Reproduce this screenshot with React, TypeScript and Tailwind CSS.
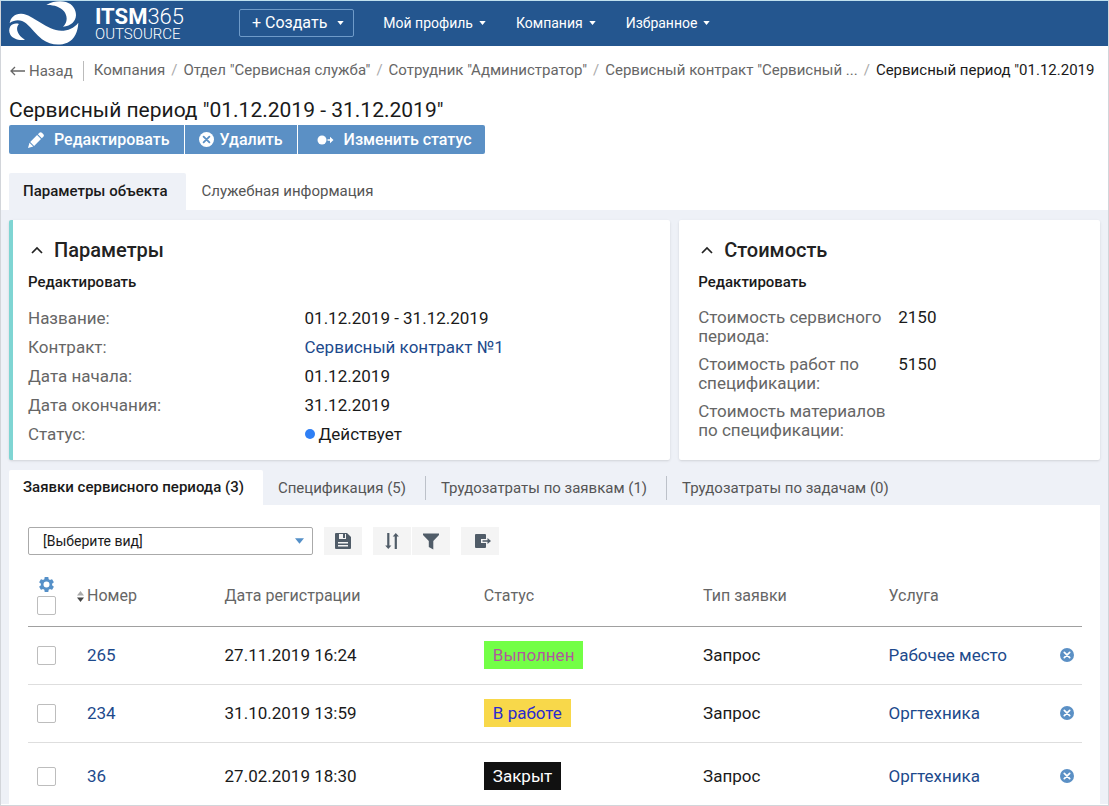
import type { ReactNode } from "react";

const Caret = ({ className = "h-1 w-[7px]" }: { className?: string }) => (
  <svg viewBox="0 0 8 5" className={className} fill="currentColor" aria-hidden="true">
    <path d="M0 0h8L4 5z" />
  </svg>
);

const Logo = () => (
  <svg viewBox="15 1 216 132" className="h-11 w-[72px] shrink-0" fill="#fff" aria-hidden="true">
    <path d="M17 67C20 50 33 38 52 39C72 40 86 52 110 66C130 78 150 90 172 90C192 90 210 82 223 66C222 92 212 116 190 126C166 136 138 133 114 116C96 102 84 84 66 68C52 56 34 55 17 67Z" />
    <path d="M127 13C146 2 168 0 186 4C206 10 216 26 216 44C215 62 202 76 177 78C190 66 192 48 180 32C168 18 148 12 127 13Z" />
    <path d="M19 77C25 69 35 67 45 70C33 82 40 104 63 117C44 120 26 114 19 102C14 93 15 84 19 77Z" />
  </svg>
);

const CrossCircle = ({ cross, className }: { cross: string; className: string }) => (
  <svg viewBox="0 0 14 14" className={className} aria-hidden="true">
    <circle cx="7" cy="7" r="7" fill="currentColor" />
    <path d="M4.300 4.300l5.400 5.400M9.700 4.300l-5.400 5.400" stroke={cross} strokeWidth="1.700" strokeLinecap="round" />
  </svg>
);

const Pencil = () => (
  <svg viewBox="0 0 16 16" className="size-4" fill="currentColor" aria-hidden="true">
    <path d="M0 16l1.500-5.200 3.800 3.800zM2.200 10l6.900-6.900 3.900 3.900-6.900 6.900zM9.900 2.300l1.500-1.500c.8-.8 1.700-.8 2.500 0l1.400 1.400c.8.8.8 1.700 0 2.500l-1.500 1.500z" />
  </svg>
);

const StatusArrow = () => (
  <svg viewBox="0 0 17 12" className="h-3 w-[17px]" fill="currentColor" aria-hidden="true">
    <circle cx="5" cy="6" r="4.500" />
    <path d="M10.500 5.200h2.500V2.800L16.500 6 13 9.200V6.800h-2.500z" />
  </svg>
);

const Chevron = () => (
  <svg viewBox="0 0 12 8" className="h-2 w-3" fill="none" stroke="#222" strokeWidth="1.700" aria-hidden="true">
    <path d="M1 7l5-5 5 5" />
  </svg>
);

const Gear = () => (
  <svg viewBox="2 2 20 20" className="size-[15px]" fill="#5590c8" aria-hidden="true">
    <path d="M19.430 12.980c.04-.32.07-.64.07-.98s-.03-.66-.07-.98l2.110-1.650c.19-.15.24-.42.12-.64l-2-3.460c-.12-.22-.39-.3-.61-.22l-2.490 1c-.52-.4-1.080-.73-1.690-.98l-.38-2.650C14.460 2.180 14.250 2 14 2h-4c-.25 0-.46.18-.49.42l-.38 2.650c-.61.25-1.170.59-1.690.98l-2.490-1c-.23-.09-.49 0-.61.22l-2 3.460c-.13.22-.07.49.12.64l2.110 1.650c-.04.32-.07.65-.07.98s.03.66.07.98l-2.110 1.650c-.19.15-.24.42-.12.64l2 3.460c.12.22.39.3.61.22l2.490-1c.52.4 1.080.73 1.690.98l.38 2.650c.03.24.24.42.49.42h4c.25 0 .46-.18.49-.42l.38-2.650c.61-.25 1.170-.59 1.690-.98l2.490 1c.23.09.49 0 .61-.22l2-3.460c.12-.22.07-.49-.12-.64zM12 16a4 4 0 1 1 0-8 4 4 0 0 1 0 8z" />
  </svg>
);

const SaveIcon = () => (
  <svg viewBox="0 0 16 16" className="size-4" aria-hidden="true">
    <path d="M1 0h11l4 4v11a1 1 0 0 1-1 1H1a1 1 0 0 1-1-1V1a1 1 0 0 1 1-1z" fill="#505c68" />
    <path d="M4 1h7v5H4zM3 9h10v1.500H3zM3 12h10v1.500H3z" fill="#f4f4f4" />
    <path d="M8 1h2v4H8z" fill="#505c68" />
  </svg>
);

const SortIcon = () => (
  <svg viewBox="0 0 16 18" className="h-[18px] w-4" fill="#505c68" aria-hidden="true">
    <path d="M3.200 1h2.200v12.500h2L4.300 17 1.200 13.500h2zM10.700 17h2.200V4.500h2L11.800 1 8.700 4.500h2z" />
  </svg>
);

const FilterIcon = () => (
  <svg viewBox="0 0 18 17" className="h-[17px] w-[18px]" fill="#505c68" aria-hidden="true">
    <path d="M1 .5h16v1.500L11.300 8v8.500L6.800 14V8L1 2z" />
  </svg>
);

const ExportIcon = () => (
  <svg viewBox="0 0 17 14" className="ml-[7px] h-3.5 w-[17px]" aria-hidden="true">
    <path d="M1 0h9a1 1 0 0 1 1 1v12a1 1 0 0 1-1 1H1a1 1 0 0 1-1-1V1a1 1 0 0 1 1-1z" fill="#505c68" />
    <path d="M6 5h5V3h1l4 4-4 4h-1V9H6z" fill="#f4f4f4" />
    <path d="M7.500 6.200h5V4l3.500 3-3.500 3V7.800h-5z" fill="#505c68" />
  </svg>
);

const NavItem = ({ children }: { children: ReactNode }) => (
  <button type="button" className="flex items-center gap-1.5 text-sm leading-5">
    {children}
    <Caret />
  </button>
);

const ToolButton = ({ label, children }: { label: string; children: ReactNode }) => (
  <button type="button" aria-label={label} className="flex h-7 w-[38px] items-center justify-center bg-[#f4f4f4]">
    {children}
  </button>
);

const Checkbox = ({ label }: { label: string }) => (
  <input
    type="checkbox"
    aria-label={label}
    className="block size-[19px] appearance-none rounded-xs border border-[#bdbdbd] bg-white checked:bg-[#5590c8]"
  />
);

const Card = ({ title, className, children }: { title: string; className: string; children: ReactNode }) => (
  <section className={`rounded-xs bg-white pt-4 pr-5 shadow-sm ${className}`}>
    <h2 className="flex items-center text-[20px] leading-7 font-medium text-[#222]">
      <button type="button" aria-label="Свернуть" className="flex w-[26px] pl-[3px]">
        <Chevron />
      </button>
      {title}
    </h2>
    <button type="button" className="mt-1.5 block text-[15px] leading-6 font-medium">
      Редактировать
    </button>
    {children}
  </section>
);

const crumbs = ["Компания", 'Отдел "Сервисная служба"', 'Сотрудник "Администратор"', 'Сервисный контракт "Сервисный ...'];

const params: { label: string; value: ReactNode }[] = [
  { label: "Название:", value: "01.12.2019 - 31.12.2019" },
  { label: "Контракт:", value: <a href="#contract" className="text-[#1d4a8c]">Сервисный контракт №1</a> },
  { label: "Дата начала:", value: "01.12.2019" },
  { label: "Дата окончания:", value: "31.12.2019" },
  {
    label: "Статус:",
    value: (
      <span className="flex items-center gap-1">
        <span className="size-2.5 rounded-full bg-[#2f7ff5]" />
        Действует
      </span>
    ),
  },
];

const costs = [
  { label: "Стоимость сервисного периода:", value: "2150" },
  { label: "Стоимость работ по спецификации:", value: "5150" },
  { label: "Стоимость материалов по спецификации:", value: "" },
];

const requests = [
  { id: "265", date: "27.11.2019 16:24", status: "Выполнен", badge: "bg-[#73ff46] text-[#b05a9c]", service: "Рабочее место", row: "h-[58px] border-b" },
  { id: "234", date: "31.10.2019 13:59", status: "В работе", badge: "bg-[#f8d84a] text-[#2a2ad0]", service: "Оргтехника", row: "h-[58px] border-b" },
  { id: "36", date: "27.02.2019 18:30", status: "Закрыт", badge: "bg-[#111] text-white", service: "Оргтехника", row: "h-[62px] *:pt-1.5" },
];

export default function App() {
  return (
    <div className="min-h-screen overflow-hidden border border-t-[#bfe0ee] border-[#d2d5da] bg-white font-['Roboto','Noto_Sans',sans-serif] text-[#1a1a1a]">
      <header className="flex h-[45px] items-center bg-[#24568f] pb-0.5 pl-2 text-white">
        <Logo />
        <div className="ml-[14px] w-[144px] pt-0.5">
          <div className="text-[22px] leading-5">
            <span className="font-bold">ITSM</span>
            <span className="font-light">365</span>
          </div>
          <div className="text-[15px] leading-[14px] font-light">OUTSOURCE</div>
        </div>
        <button type="button" className="flex h-7 items-center gap-2.5 rounded-xs border border-[#6f9bc9] pr-[9px] pl-3 text-base leading-5">
          + Создать
          <Caret />
        </button>
        <nav className="ml-[29px] flex gap-[30px]">
          <NavItem>Мой профиль</NavItem>
          <NavItem>Компания</NavItem>
          <NavItem>Избранное</NavItem>
        </nav>
      </header>

      <nav className="flex h-[49px] items-center overflow-hidden pl-[9px] text-[15px] whitespace-nowrap text-[#666]">
        <a href="#back" className="mr-2.5 flex items-center gap-1 border-r border-[#bbb] pr-2.5 leading-5">
          <svg viewBox="0 0 15 10" className="h-2.5 w-[15px]" fill="none" stroke="currentColor" strokeWidth="1.300" aria-hidden="true">
            <path d="M15 5H1M5 1L1 5l4 4" />
          </svg>
          Назад
        </a>
        {crumbs.map((c) => (
          <span key={c}>
            <a href="#crumb">{c}</a>
            <span className="mx-1.5 text-[#aaa]">/</span>
          </span>
        ))}
        <span className="text-[#1a1a1a]">Сервисный период "01.12.2019</span>
      </nav>

      <div className="px-2">
        <h1 className="text-[21px] leading-[30px]">Сервисный период "01.12.2019 - 31.12.2019"</h1>
        <div className="flex gap-px text-base leading-5 font-medium text-white">
          <button type="button" className="flex h-[29px] items-center gap-2.5 rounded-l-xs bg-[#5b90c5] pr-3.5 pl-[19px]">
            <Pencil />
            Редактировать
          </button>
          <button type="button" className="flex h-[29px] items-center gap-1.5 bg-[#5b90c5] px-3.5">
            <CrossCircle cross="#5b90c5" className="size-[15px]" />
            Удалить
          </button>
          <button type="button" className="flex h-[29px] items-center gap-2.5 rounded-r-xs bg-[#5b90c5] pr-3.5 pl-[19px]">
            <StatusArrow />
            Изменить статус
          </button>
        </div>
        <div className="mt-[19px] flex h-[37px] text-[15px]">
          <button type="button" className="rounded-t-xs bg-[#eef1f7] pr-[19px] pl-3.5 font-medium">Параметры объекта</button>
          <button type="button" className="pr-[19px] pl-[15px] text-[#555]">Служебная информация</button>
        </div>
      </div>

      <main className="bg-[#eef1f7] px-2 pt-2.5">
        <div className="grid grid-cols-[11fr_7fr] gap-[9px]">
          <Card title="Параметры" className="border-l-4 border-[#7fd5d3] pb-4 pl-[15px]">
            <dl className="mt-3.5 grid grid-cols-[4fr_5fr] gap-y-[9px] text-[17px] leading-5">
              {params.map((p) => (
                <div key={p.label} className="contents">
                  <dt className="text-[#666]">{p.label}</dt>
                  <dd>{p.value}</dd>
                </div>
              ))}
            </dl>
          </Card>
          <Card title="Стоимость" className="pl-[19px]">
            <dl className="mt-3.5 grid grid-cols-[200px_1fr] gap-y-[9px] text-[17px] leading-[19px]">
              {costs.map((c) => (
                <div key={c.label} className="contents">
                  <dt className="text-[#666]">{c.label}</dt>
                  <dd>{c.value}</dd>
                </div>
              ))}
            </dl>
          </Card>
        </div>

        <div className="mt-2.5 flex h-[35px] items-center text-[15px] text-[#555]">
          <button type="button" className="h-full rounded-t-xs bg-white pr-[19px] pl-3.5 font-medium text-[#1a1a1a]">Заявки сервисного периода (3)</button>
          <button type="button" className="pr-[19px] pl-[15px] leading-6">Спецификация (5)</button>
          <button type="button" className="border-x border-[#bcc1c9] pr-[19px] pl-[15px] leading-6">Трудозатраты по заявкам (1)</button>
          <button type="button" className="pr-[19px] pl-[15px] leading-6">Трудозатраты по задачам (0)</button>
        </div>

        <section className="bg-white pt-[22px] pr-[18px] pl-[19px]">
          <div className="flex items-center">
            <div className="relative mr-[11px] w-[285px]">
              <select aria-label="Вид" className="block h-7 w-full appearance-none rounded-xs border border-[#aaa] bg-white pl-3.5 text-sm">
                <option>[Выберите вид]</option>
              </select>
              <Caret className="pointer-events-none absolute top-[11px] right-[9px] h-[6px] w-[9px] text-[#5590c8]" />
            </div>
            <div className="mr-[11px]">
              <ToolButton label="Сохранить"><SaveIcon /></ToolButton>
            </div>
            <div className="mr-[11px] flex gap-px">
              <ToolButton label="Сортировка"><SortIcon /></ToolButton>
              <ToolButton label="Фильтр"><FilterIcon /></ToolButton>
            </div>
            <ToolButton label="Экспорт"><ExportIcon /></ToolButton>
          </div>

          <table className="mt-3 w-full table-fixed text-left text-[17px] leading-5">
            <colgroup>
              <col className="w-[49px]" />
              <col className="w-[14%]" />
              <col className="w-[24.6%]" />
              <col className="w-[20.8%]" />
              <col className="w-[17.6%]" />
              <col />
              <col className="w-[30px]" />
            </colgroup>
            <thead>
              <tr className="h-[59px] border-b border-[#a0a0a0] text-base leading-5 text-[#666] *:font-normal">
                <th className="pl-[9px]">
                  <div className="flex w-[19px] flex-col items-center gap-1">
                    <button type="button" aria-label="Настройка столбцов" className="block"><Gear /></button>
                    <Checkbox label="Выбрать все" />
                  </div>
                </th>
                <th>
                  <button type="button" className="flex items-center gap-[3px]">
                    <svg viewBox="0 0 7 11" className="h-[11px] w-[7px]" aria-hidden="true">
                      <path d="M0 4.500L3.500 0 7 4.500z" fill="#aaa" />
                      <path d="M0 6.500h7L3.500 11z" fill="#444" />
                    </svg>
                    Номер
                  </button>
                </th>
                <th>Дата регистрации</th>
                <th>Статус</th>
                <th>Тип заявки</th>
                <th>Услуга</th>
                <th />
              </tr>
            </thead>
            <tbody>
              {requests.map((r) => (
                <tr key={r.id} className={`border-[#dedede] ${r.row}`}>
                  <td className="pl-[9px]"><Checkbox label={`Заявка ${r.id}`} /></td>
                  <td className="pl-2.5"><a href="#request" className="text-[#1d4a8c]">{r.id}</a></td>
                  <td>{r.date}</td>
                  <td><span className={`inline-block px-[9px] py-1 ${r.badge}`}>{r.status}</span></td>
                  <td>Запрос</td>
                  <td><a href="#service" className="text-[#1d4a8c]">{r.service}</a></td>
                  <td>
                    <button type="button" aria-label={`Удалить заявку ${r.id}`} className="ml-2 block text-[#5b90c5]">
                      <CrossCircle cross="#fff" className="size-3.5" />
                    </button>
                  </td>
                </tr>
              ))}
            </tbody>
          </table>
        </section>
      </main>
    </div>
  );
}
